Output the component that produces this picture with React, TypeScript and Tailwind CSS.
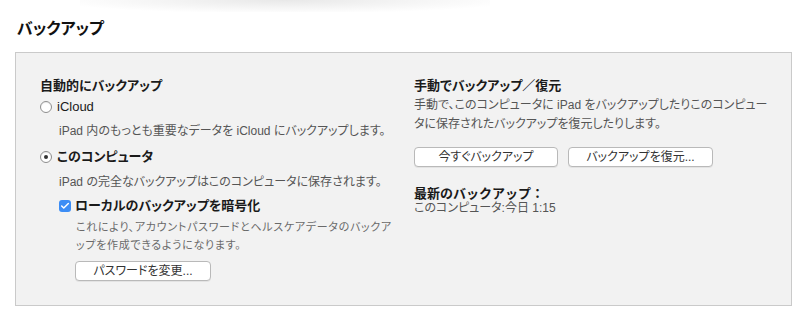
import { Check } from 'lucide-react'

const font = "font-['Liberation_Sans','Noto_Sans_CJK_JP',sans-serif] [font-feature-settings:'palt']"

const Radio = ({ checked }: { checked?: boolean }) => (
  <span className="flex items-center justify-center size-[12px] rounded-full border border-[#8e8e8e] bg-white shadow-[inset_0_1px_1px_rgba(0,0,0,0.08)]">
    {checked && <span className="size-[4px] rounded-full bg-[#333]" />}
  </span>
)

const MacButton = ({ label, width }: { label: string; width: string }) => (
  <button
    className={`${width} h-[20px] flex items-center justify-center rounded-[4px] border border-[#b9b9b9] bg-white text-[12px] text-[#333] shadow-[0_1px_0_rgba(0,0,0,0.06)]`}
  >
    {label}
  </button>
)

export default function App() {
  return (
    <div className={`w-[800px] h-[321px] bg-white overflow-hidden ${font}`}>
      <div className="ml-[80px] w-[410px] h-[12px] bg-[radial-gradient(ellipse_at_top,#e8e8e8_0%,#f5f5f5_45%,transparent_80%)]" />
      <h1 className="mt-[5px] pl-[17px] text-[16px] leading-[24px] font-bold text-[#111]">
        バックアップ
      </h1>
      <div className="mt-[11px] ml-[15px] w-[777px] h-[254px] border border-[#cacaca] bg-[#f2f2f2] flex pt-[24px]">
        <div className="w-[374px] ml-[24px] flex flex-col">
          <p className="text-[13px] leading-[18px] font-bold text-[#1a1a1a]">
            自動的にバックアップ
          </p>
          <label className="mt-[2px] h-[20px] flex items-center gap-[5px] text-[13px] text-[#1a1a1a]">
            <Radio />
            iCloud
          </label>
          <p className="mt-[5px] ml-[19px] text-[12px] leading-[18px] text-[#555]">
            iPad 内のもっとも重要なデータを iCloud にバックアップします。
          </p>
          <label className="mt-[7px] h-[20px] flex items-center gap-[5px] text-[13px] font-bold text-[#1a1a1a]">
            <Radio checked />
            このコンピュータ
          </label>
          <p className="mt-[6px] ml-[19px] text-[12px] leading-[18px] text-[#555]">
            iPad の完全なバックアップはこのコンピュータに保存されます。
          </p>
          <label className="mt-[5px] ml-[19px] h-[20px] flex items-center gap-[4px] text-[13px] font-bold text-[#1a1a1a]">
            <span className="flex items-center justify-center size-[12px] rounded-[3px] bg-[#3c8df5]">
              <Check className="size-[10px] text-white" strokeWidth={3.5} />
            </span>
            ローカルのバックアップを暗号化
          </label>
          <p className="mt-[2px] ml-[36px] text-[11px] leading-[18px] tracking-[0.7px] text-[#6a6a6a]">
            これにより、アカウントパスワードとヘルスケアデータのバックア
            <br />
            ップを作成できるようになります。
          </p>
          <div className="mt-[7px] ml-[35px]">
            <MacButton label="パスワードを変更..." width="w-[136px]" />
          </div>
        </div>
        <div className="flex flex-col">
          <p className="text-[13px] leading-[18px] font-bold text-[#1a1a1a]">
            手動でバックアップ／復元
          </p>
          <p className="mt-[1px] text-[12px] leading-[19px] text-[#555]">
            手動で、このコンピュータに iPad をバックアップしたりこのコンピュー
            <br />
            タに保存されたバックアップを復元したりします。
          </p>
          <div className="mt-[13px] flex gap-[10px]">
            <MacButton label="今すぐバックアップ" width="w-[144px]" />
            <MacButton label="バックアップを復元..." width="w-[145px]" />
          </div>
          <p className="mt-[20px] text-[13px] leading-[14px] font-bold text-[#1a1a1a] [font-feature-settings:normal]">
            最新のバックアップ：
          </p>
          <p className="text-[12px] leading-[14px] text-[#555]">
            このコンピュータ:今日 1:15
          </p>
        </div>
      </div>
    </div>
  )
}
